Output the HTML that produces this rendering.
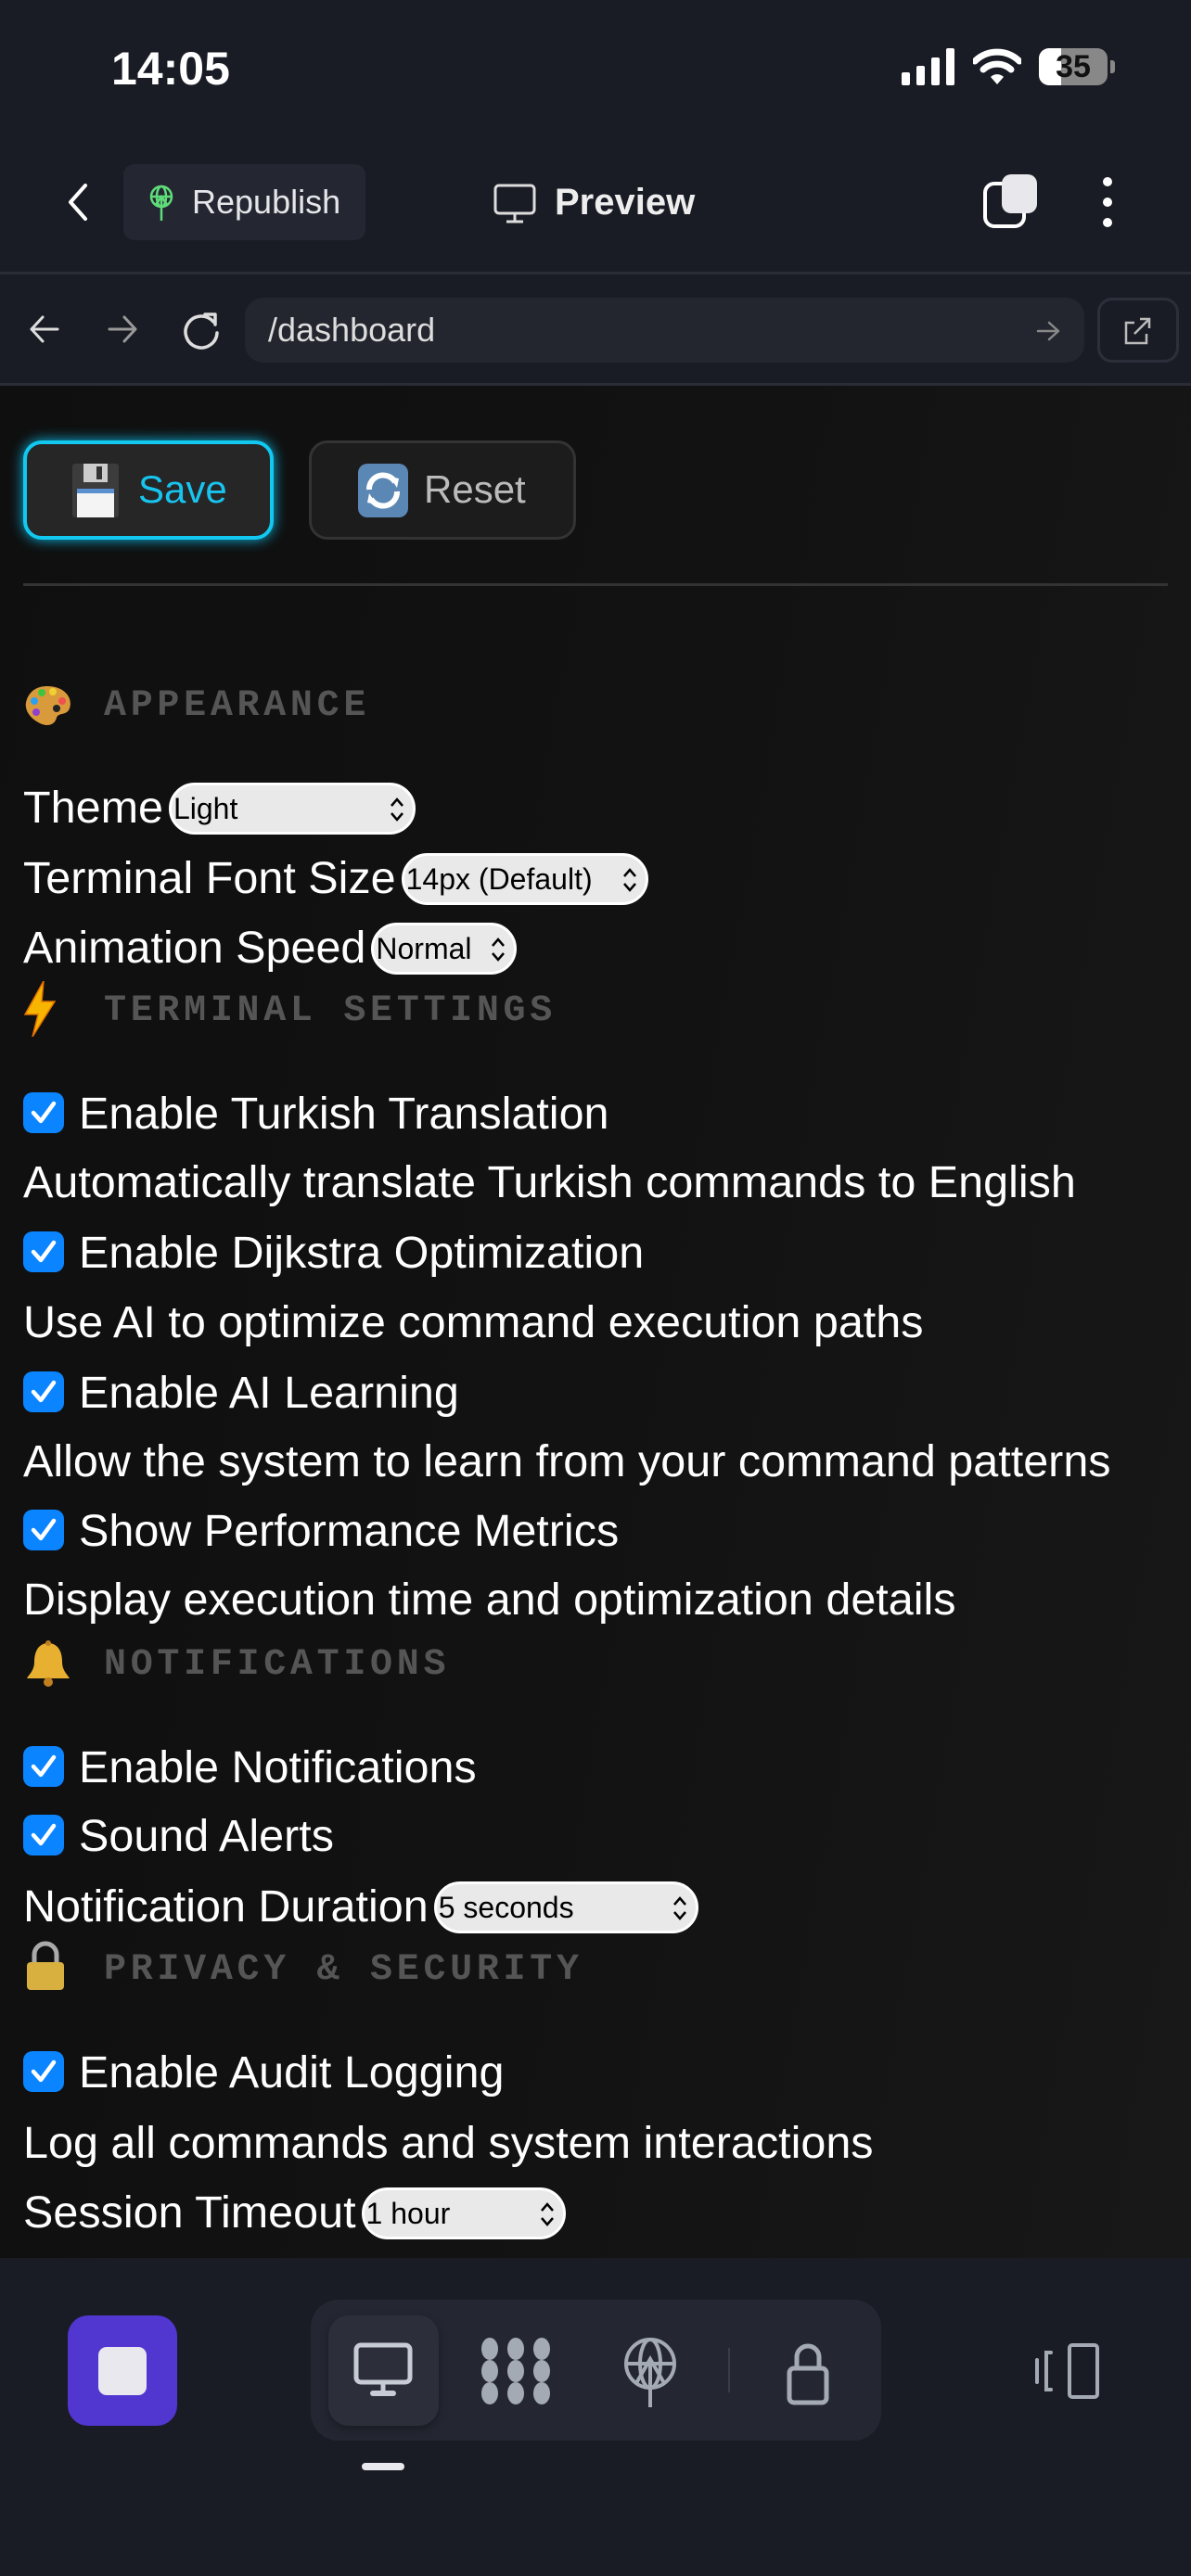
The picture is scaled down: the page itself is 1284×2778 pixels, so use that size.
<!DOCTYPE html>
<html><head><meta charset="utf-8"><style>
*{margin:0;padding:0;box-sizing:border-box}
body{width:1284px;height:2778px;background:#1a1c25;font-family:"Liberation Sans",sans-serif;position:relative;overflow:hidden;color:#fff}
.a{position:absolute}
.content{left:0;top:416px;width:1284px;height:2019px;background:linear-gradient(100deg,#0f0f0f 0%,#121212 50%,#181818 100%)}
.row{position:absolute;left:25px;height:76px;line-height:76px;font-size:48.5px;color:#fff;white-space:nowrap}
.cb{display:inline-block;width:44px;height:44px;background:#0a84ff;border-radius:10px;vertical-align:middle;margin-right:16px;position:relative;top:-4px}
.cb svg{position:absolute;left:8px;top:9px}
.hdr{position:absolute;left:112px;font-family:"Liberation Mono",monospace;font-weight:bold;font-size:40px;letter-spacing:4.7px;color:#555;height:50px;line-height:50px;white-space:nowrap}
.sel{display:inline-block;position:relative;vertical-align:middle;top:-2px;margin-left:6px;height:56px;background:#e9e9e9;border:3px solid #fff;border-radius:28px;color:#000;font-size:32px;line-height:50px;padding-left:2px;white-space:nowrap;overflow:hidden;text-align:left}
.sel svg{position:absolute;right:8px;top:11px}
.ic{position:absolute;left:25px}
</style></head><body>
<!-- status bar -->
<div class="a" style="left:120px;top:44px;font-size:50px;font-weight:bold;line-height:60px">14:05</div>
<svg class="a" style="left:972px;top:52px" width="60" height="40"><rect x="0" y="26" width="9" height="14" rx="2" fill="#fff"/><rect x="16" y="19" width="9" height="21" rx="2" fill="#fff"/><rect x="32" y="10" width="9" height="30" rx="2" fill="#fff"/><rect x="48" y="0" width="9" height="40" rx="2" fill="#fff"/></svg>
<svg class="a" style="left:1049px;top:52px" width="52" height="40" viewBox="0 0 52 40"><path d="M2 14 A34 34 0 0 1 50 14" stroke="#fff" stroke-width="7" fill="none" stroke-linecap="round"/><path d="M11 23 A22 22 0 0 1 41 23" stroke="#fff" stroke-width="7" fill="none" stroke-linecap="round"/><path d="M19 31 L26 39 L33 31 A10 10 0 0 0 19 31Z" fill="#fff"/></svg>
<div class="a" style="left:1120px;top:52px;width:74px;height:40px;border-radius:11px;background:#888;overflow:hidden"><div style="width:24px;height:40px;background:#fff"></div><div class="a" style="left:0;top:0;width:74px;text-align:center;font-size:34px;font-weight:bold;line-height:40px;color:#111">35</div></div>
<div class="a" style="left:1197px;top:65px;width:5px;height:14px;background:#888;border-radius:0 3px 3px 0"></div>
<!-- nav bar -->
<svg class="a" style="left:70px;top:196px" width="28" height="44"><path d="M22 4 L6 22 L22 40" stroke="#fff" stroke-width="4" fill="none" stroke-linecap="round" stroke-linejoin="round"/></svg>
<div class="a" style="left:133px;top:177px;width:261px;height:82px;background:#242731;border-radius:12px"></div>
<svg class="a" style="left:160px;top:198px" width="28" height="42" viewBox="0 0 28 42"><g stroke="#5fdc7a" stroke-width="2.5" fill="none"><circle cx="14" cy="14" r="11"/><ellipse cx="14" cy="14" rx="5" ry="11"/><line x1="3" y1="14" x2="25" y2="14"/><line x1="14" y1="14" x2="14" y2="40"/><path d="M7 24 L14 14 L21 24"/></g></svg>
<div class="a" style="left:207px;top:190px;font-size:36px;line-height:56px;color:#e6e6ea">Republish</div>
<svg class="a" style="left:532px;top:198px" width="46" height="44"><rect x="2" y="2" width="42" height="30" rx="4" stroke="#ddd" stroke-width="3" fill="none"/><line x1="23" y1="32" x2="23" y2="40" stroke="#ddd" stroke-width="3"/><line x1="14" y1="41" x2="32" y2="41" stroke="#ddd" stroke-width="3"/></svg>
<div class="a" style="left:598px;top:190px;font-size:40px;font-weight:bold;line-height:56px;color:#eee">Preview</div>
<div class="a" style="left:1060px;top:196px;width:46px;height:50px;border:4px solid #fff;border-radius:12px"></div>
<div class="a" style="left:1080px;top:188px;width:38px;height:42px;background:#e8e8ec;border-radius:10px"></div>
<div class="a" style="left:1189px;top:191px;width:10px;height:10px;border-radius:5px;background:#fff"></div>
<div class="a" style="left:1189px;top:213px;width:10px;height:10px;border-radius:5px;background:#fff"></div>
<div class="a" style="left:1189px;top:235px;width:10px;height:10px;border-radius:5px;background:#fff"></div>
<div class="a" style="left:0;top:293px;width:1284px;height:3px;background:#2a2c36"></div>
<!-- url bar -->
<svg class="a" style="left:30px;top:337px" width="36" height="36"><path d="M32 18 H4 M16 5 L4 18 L16 31" stroke="#ddd" stroke-width="3" fill="none" stroke-linecap="round" stroke-linejoin="round"/></svg>
<svg class="a" style="left:114px;top:337px" width="36" height="36"><path d="M4 18 H32 M20 5 L32 18 L20 31" stroke="#999" stroke-width="3" fill="none" stroke-linecap="round" stroke-linejoin="round"/></svg>
<svg class="a" style="left:194px;top:333px" width="46" height="46" viewBox="0 0 46 46"><path d="M36 14 A17 17 0 1 0 40 26" stroke="#ddd" stroke-width="3.5" fill="none" stroke-linecap="round"/><path d="M27 6 L38 6 L38 17" stroke="#ddd" stroke-width="3.5" fill="none" stroke-linecap="round" stroke-linejoin="round"/></svg>
<div class="a" style="left:264px;top:321px;width:905px;height:70px;background:#23252f;border-radius:20px"></div>
<div class="a" style="left:289px;top:327px;font-size:36px;line-height:58px;color:#ddd">/dashboard</div>
<svg class="a" style="left:1116px;top:343px" width="28" height="28"><path d="M3 14 H25 M15 5 L25 14 L15 23" stroke="#888" stroke-width="2.5" fill="none" stroke-linecap="round" stroke-linejoin="round"/></svg>
<div class="a" style="left:1183px;top:321px;width:88px;height:70px;border:3px solid #2c2f3a;border-radius:16px"></div>
<svg class="a" style="left:1209px;top:340px" width="34" height="34"><path d="M14 8 H5 V30 H27 V20" stroke="#bbb" stroke-width="2.5" fill="none"/><path d="M14 20 L30 4 M20 4 H30 V14" stroke="#bbb" stroke-width="2.5" fill="none"/></svg>
<div class="a" style="left:0;top:413px;width:1284px;height:3px;background:#2a2c36"></div>
<!-- content -->
<div class="a content"></div>
<div class="a" style="left:25px;top:475px;width:270px;height:107px;background:#262626;border:4px solid #12c8f0;border-radius:20px;box-shadow:0 0 14px #0bb5e0"></div>
<svg class="a" style="left:78px;top:500px" width="50" height="58"><rect x="0" y="0" width="50" height="58" rx="3" fill="#3c3c3c"/><rect x="12" y="0" width="26" height="20" fill="#ccc"/><rect x="26" y="3" width="6" height="14" fill="#333"/><rect x="5" y="27" width="40" height="31" fill="#f4f4f4"/><rect x="5" y="27" width="40" height="5" fill="#5a8fd0"/></svg>
<div class="a" style="left:149px;top:500px;font-size:42px;line-height:56px;color:#18c4ef">Save</div>
<div class="a" style="left:333px;top:475px;width:288px;height:107px;background:#1c1c1c;border:3px solid #333;border-radius:20px"></div>
<svg class="a" style="left:386px;top:500px" width="54" height="58"><rect x="0" y="0" width="54" height="58" rx="10" fill="#5b87b5"/><path d="M12 28 A15 15 0 0 1 40 20 M42 30 A15 15 0 0 1 14 38" stroke="#fff" stroke-width="6" fill="none"/><path d="M34 14 L44 16 L42 26Z M20 44 L10 42 L12 32Z" fill="#fff"/></svg>
<div class="a" style="left:457px;top:500px;font-size:42px;line-height:56px;color:#bbb">Reset</div>
<div class="a" style="left:25px;top:629px;width:1234px;height:3px;background:#333"></div>

<!-- section icons -->
<svg class="ic" style="top:738px" width="54" height="46" viewBox="0 0 54 46"><path d="M26 2 C44 2 54 14 50 26 C47 34 38 30 36 36 C34 44 26 46 18 42 C6 36 0 26 4 16 C8 6 16 2 26 2Z" fill="#d99a3c"/><circle cx="12" cy="18" r="4" fill="#2aa0f0"/><circle cx="20" cy="9" r="4" fill="#3ec43e"/><circle cx="32" cy="8" r="4" fill="#f0d030"/><circle cx="42" cy="18" r="4" fill="#f05050"/><circle cx="14" cy="30" r="4" fill="#9040d0"/><circle cx="36" cy="26" r="4" fill="#222"/></svg>
<div class="hdr" style="top:737px">APPEARANCE</div>
<svg class="ic" style="top:1058px" width="36" height="60" viewBox="0 0 36 60"><path d="M22 0 L2 36 L16 36 L10 60 L34 22 L20 22 Z" fill="#f7b500" stroke="#e07000" stroke-width="1.5"/></svg>
<div class="hdr" style="top:1066px">TERMINAL SETTINGS</div>
<svg class="ic" style="top:1768px" width="54" height="52" viewBox="0 0 54 52"><path d="M27 4 C16 4 12 14 12 24 C12 34 6 38 4 42 H50 C48 38 42 34 42 24 C42 14 38 4 27 4Z" fill="#e8b030"/><circle cx="27" cy="46" r="5" fill="#c08020"/><circle cx="27" cy="4" r="3" fill="#c08020"/></svg>
<div class="hdr" style="top:1771px">NOTIFICATIONS</div>
<svg class="ic" style="top:2092px" width="48" height="56" viewBox="0 0 48 56"><path d="M12 24 V16 A12 12 0 0 1 36 16 V24" stroke="#aaa" stroke-width="5" fill="none"/><rect x="4" y="24" width="40" height="30" rx="4" fill="#d8b040"/></svg>
<div class="hdr" style="top:2100px">PRIVACY &amp; SECURITY</div>

<!-- rows -->
<div class="row" style="top:833px">Theme<span class="sel" style="width:266px">Light<svg width="18" height="30"><path d="M3 11 L9 4 L15 11 M3 19 L9 26 L15 19" stroke="#000" stroke-width="2.5" fill="none"/></svg></span></div>
<div class="row" style="top:909px">Terminal Font Size<span class="sel" style="width:266px">14px (Default)<svg width="18" height="30"><path d="M3 11 L9 4 L15 11 M3 19 L9 26 L15 19" stroke="#000" stroke-width="2.5" fill="none"/></svg></span></div>
<div class="row" style="top:984px">Animation Speed<span class="sel" style="width:157px">Normal<svg width="18" height="30"><path d="M3 11 L9 4 L15 11 M3 19 L9 26 L15 19" stroke="#000" stroke-width="2.5" fill="none"/></svg></span></div>

<div class="row" style="top:1163px"><span class="cb"><svg width="28" height="26"><path d="M3 13 L11 22 L25 3" stroke="#fff" stroke-width="4.5" fill="none" stroke-linecap="round" stroke-linejoin="round"/></svg></span>Enable Turkish Translation</div>
<div class="row" style="top:1237px">Automatically translate Turkish commands to English</div>
<div class="row" style="top:1313px"><span class="cb"><svg width="28" height="26"><path d="M3 13 L11 22 L25 3" stroke="#fff" stroke-width="4.5" fill="none" stroke-linecap="round" stroke-linejoin="round"/></svg></span>Enable Dijkstra Optimization</div>
<div class="row" style="top:1388px">Use AI to optimize command execution paths</div>
<div class="row" style="top:1464px"><span class="cb"><svg width="28" height="26"><path d="M3 13 L11 22 L25 3" stroke="#fff" stroke-width="4.5" fill="none" stroke-linecap="round" stroke-linejoin="round"/></svg></span>Enable AI Learning</div>
<div class="row" style="top:1538px">Allow the system to learn from your command patterns</div>
<div class="row" style="top:1613px"><span class="cb"><svg width="28" height="26"><path d="M3 13 L11 22 L25 3" stroke="#fff" stroke-width="4.5" fill="none" stroke-linecap="round" stroke-linejoin="round"/></svg></span>Show Performance Metrics</div>
<div class="row" style="top:1687px">Display execution time and optimization details</div>

<div class="row" style="top:1868px"><span class="cb"><svg width="28" height="26"><path d="M3 13 L11 22 L25 3" stroke="#fff" stroke-width="4.5" fill="none" stroke-linecap="round" stroke-linejoin="round"/></svg></span>Enable Notifications</div>
<div class="row" style="top:1942px"><span class="cb"><svg width="28" height="26"><path d="M3 13 L11 22 L25 3" stroke="#fff" stroke-width="4.5" fill="none" stroke-linecap="round" stroke-linejoin="round"/></svg></span>Sound Alerts</div>
<div class="row" style="top:2018px">Notification Duration<span class="sel" style="width:285px">5 seconds<svg width="18" height="30"><path d="M3 11 L9 4 L15 11 M3 19 L9 26 L15 19" stroke="#000" stroke-width="2.5" fill="none"/></svg></span></div>

<div class="row" style="top:2197px"><span class="cb"><svg width="28" height="26"><path d="M3 13 L11 22 L25 3" stroke="#fff" stroke-width="4.5" fill="none" stroke-linecap="round" stroke-linejoin="round"/></svg></span>Enable Audit Logging</div>
<div class="row" style="top:2273px">Log all commands and system interactions</div>
<div class="row" style="top:2348px">Session Timeout<span class="sel" style="width:220px">1 hour<svg width="18" height="30"><path d="M3 11 L9 4 L15 11 M3 19 L9 26 L15 19" stroke="#000" stroke-width="2.5" fill="none"/></svg></span></div>

<!-- bottom bar -->
<div class="a" style="left:73px;top:2497px;width:118px;height:119px;background:#5136d0;border-radius:22px"></div>
<div class="a" style="left:106px;top:2531px;width:52px;height:52px;background:#e8e8ee;border-radius:9px"></div>
<div class="a" style="left:335px;top:2480px;width:615px;height:152px;background:#242731;border-radius:30px"></div>
<div class="a" style="left:354px;top:2497px;width:119px;height:119px;background:#2c2f3a;border-radius:22px;box-shadow:0 4px 10px rgba(0,0,0,.3)"></div>
<svg class="a" style="left:380px;top:2525px" width="66" height="62"><rect x="4" y="4" width="58" height="40" rx="5" stroke="#c8ccd4" stroke-width="5" fill="none"/><line x1="33" y1="44" x2="33" y2="54" stroke="#c8ccd4" stroke-width="5"/><line x1="22" y1="56" x2="44" y2="56" stroke="#c8ccd4" stroke-width="6" stroke-linecap="round"/></svg>
<svg class="a" style="left:518px;top:2521px" width="76" height="72" fill="#a4aab4"><ellipse cx="10" cy="12" rx="9" ry="12"/><ellipse cx="38" cy="12" rx="9" ry="12"/><ellipse cx="66" cy="12" rx="9" ry="12"/><ellipse cx="10" cy="36" rx="9" ry="12"/><ellipse cx="38" cy="36" rx="9" ry="12"/><ellipse cx="66" cy="36" rx="9" ry="12"/><ellipse cx="10" cy="60" rx="9" ry="12"/><ellipse cx="38" cy="60" rx="9" ry="12"/><ellipse cx="66" cy="60" rx="9" ry="12"/></svg>
<svg class="a" style="left:672px;top:2520px" width="58" height="76" viewBox="0 0 58 76"><g stroke="#a4aab4" stroke-width="4" fill="none"><circle cx="29" cy="29" r="26"/><ellipse cx="29" cy="29" rx="11" ry="26"/><line x1="3" y1="29" x2="55" y2="29"/><line x1="29" y1="24" x2="29" y2="76"/><path d="M14 50 L29 24 L44 50"/></g></svg>
<div class="a" style="left:785px;top:2532px;width:2px;height:48px;background:#3a3d48"></div>
<svg class="a" style="left:846px;top:2524px" width="50" height="70" viewBox="0 0 50 70"><g stroke="#a4aab4" stroke-width="5" fill="none"><path d="M13 30 V18 A12 12 0 0 1 37 18 V30"/><rect x="5" y="30" width="40" height="37" rx="5"/></g></svg>
<svg class="a" style="left:1115px;top:2527px" width="72" height="60" viewBox="0 0 72 60"><g stroke="#a4aab4" stroke-width="4" fill="none" stroke-linecap="round"><line x1="3" y1="18" x2="3" y2="42"/><path d="M18 10 H13 V50 H18"/><rect x="38" y="2" width="30" height="56" rx="3"/></g></svg>
<div class="a" style="left:390px;top:2656px;width:46px;height:8px;background:#e8e8ee;border-radius:4px"></div>
</body></html>
